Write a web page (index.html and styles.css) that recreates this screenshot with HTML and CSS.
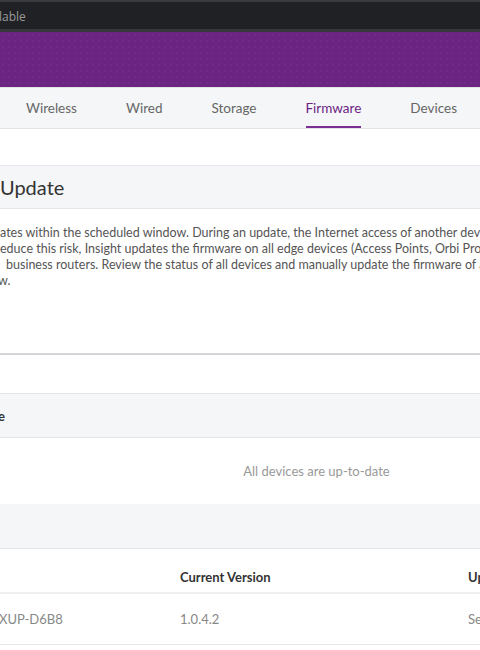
FILE: index.html
```html
<!DOCTYPE html>
<html>
<head>
<meta charset="utf-8">
<link rel="stylesheet" href="styles.css">
</head>
<body>
<div class="chrome"><span class="chrome-text">lable</span></div>
<div class="banner"></div>
<nav class="tabs">
  <span class="tab">Wireless</span>
  <span class="tab">Wired</span>
  <span class="tab">Storage</span>
  <span class="tab active">Firmware</span>
  <span class="tab">Devices</span>
</nav>
<div class="gap-top"></div>
<div class="panel-head"><span class="panel-title">Update</span></div>
<div class="desc">
  <div class="line l1">ates within the scheduled window. During an update, the Internet access of another device might be interrupted.</div>
  <div class="line l2">educe this risk, Insight updates the firmware on all edge devices (Access Points, Orbi Pro WiFi systems</div>
  <div class="line l3">business routers. Review the status of all devices and manually update the firmware of any device</div>
  <div class="line l4">w.</div>
</div>
<div class="divider"></div>
<div class="section-head"><span class="section-title">e</span></div>
<div class="empty"><span>All devices are up-to-date</span></div>
<div class="band"></div>
<div class="table">
  <div class="row head">
    <span class="cell c1"></span>
    <span class="cell c2">Current Version</span>
    <span class="cell c3">Update Status</span>
  </div>
  <div class="row data">
    <span class="cell c1">XUP-D6B8</span>
    <span class="cell c2">1.0.4.2</span>
    <span class="cell c3">Selected</span>
  </div>
</div>
</body>
</html>
```
FILE: styles.css
```css
html, body {
  margin: 0;
  padding: 0;
}
body {
  width: 480px;
  height: 650px;
  overflow: hidden;
  background: #ffffff;
  font-family: Lato, "Open Sans", "Liberation Sans", sans-serif;
  color: #555;
}
.chrome {
  height: 25px;
  background: #202124;
  border-top: 2px solid #3b3b3e;
  border-bottom: 3px solid #38383b;
  display: flex;
  align-items: center;
  padding-top: 2px;
  box-sizing: content-box;
  white-space: nowrap;
  overflow: hidden;
}
.chrome-text {
  font-size: 12px;
  color: #9a9a9c;
  margin-left: -1px;
  font-family: "Open Sans", "Liberation Sans", sans-serif;
}
.banner {
  height: 55px;
  background-color: #6c2483;
  background-image: radial-gradient(rgba(255,255,255,0.03) 0.8px, transparent 1px);
  background-size: 6px 6px;
}
.tabs {
  height: 40px;
  background: #f5f6f8;
  border-top: 1px solid #e4e4e8;
  border-bottom: 1px solid #e2e3e6;
  display: flex;
  gap: 49px;
  padding-left: 26px;
  box-sizing: content-box;
}
.tab {
  font-size: 13.5px;
  color: #666;
  display: flex;
  align-items: center;
  padding-top: 1px;
  border-bottom: 2px solid transparent;
  white-space: nowrap;
}
.tab.active {
  color: #6c2483;
  border-bottom-color: #7b2f93;
}
.gap-top {
  height: 36px;
}
.panel-head {
  height: 42px;
  background: #f5f6f8;
  border-top: 1px solid #e6e7ea;
  border-bottom: 1px solid #e6e7ea;
  display: flex;
  align-items: center;
}
.panel-title {
  font-size: 20px;
  color: #333;
}
.desc {
  padding-top: 16px;
  height: 128px;
  font-size: 12.5px;
  line-height: 16px;
  color: #555;
}
.line {
  white-space: nowrap;
}
.l3 {
  margin-left: 6px;
}
.l4 {
  margin-left: -2px;
}
.divider {
  height: 2px;
  background: #d4d5d8;
}
.section-head {
  margin-top: 38px;
  height: 43px;
  background: #f5f6f8;
  border-top: 1px solid #e3e4e7;
  border-bottom: 1px solid #e3e4e7;
  display: flex;
  align-items: center;
}
.section-title {
  font-size: 13px;
  font-weight: 700;
  color: #333;
  margin-left: -2px;
}
.empty {
  height: 66px;
  display: flex;
  align-items: center;
  justify-content: center;
  padding-left: 153px;
  font-size: 13px;
  color: #999;
}
.band {
  height: 44px;
  background: #f5f6f8;
  border-bottom: 1px solid #e3e4e7;
}
.row {
  display: grid;
  grid-template-columns: 179px 289px 1fr;
  white-space: nowrap;
  overflow: hidden;
}
.row.head {
  height: 45px;
  align-items: center;
  padding-top: 13px;
  box-sizing: border-box;
  border-bottom: 2px solid #eeeff1;
  font-size: 13px;
  font-weight: 700;
  color: #333;
}
.row.data {
  height: 51px;
  align-items: center;
  padding-bottom: 1px;
  box-sizing: border-box;
  border-bottom: 1px solid #e6e7ea;
  font-size: 13px;
  color: #888;
}
.cell.c1 {
  margin-left: -1px;
}
.cell.c2 {
  margin-left: 1px;
}
```
